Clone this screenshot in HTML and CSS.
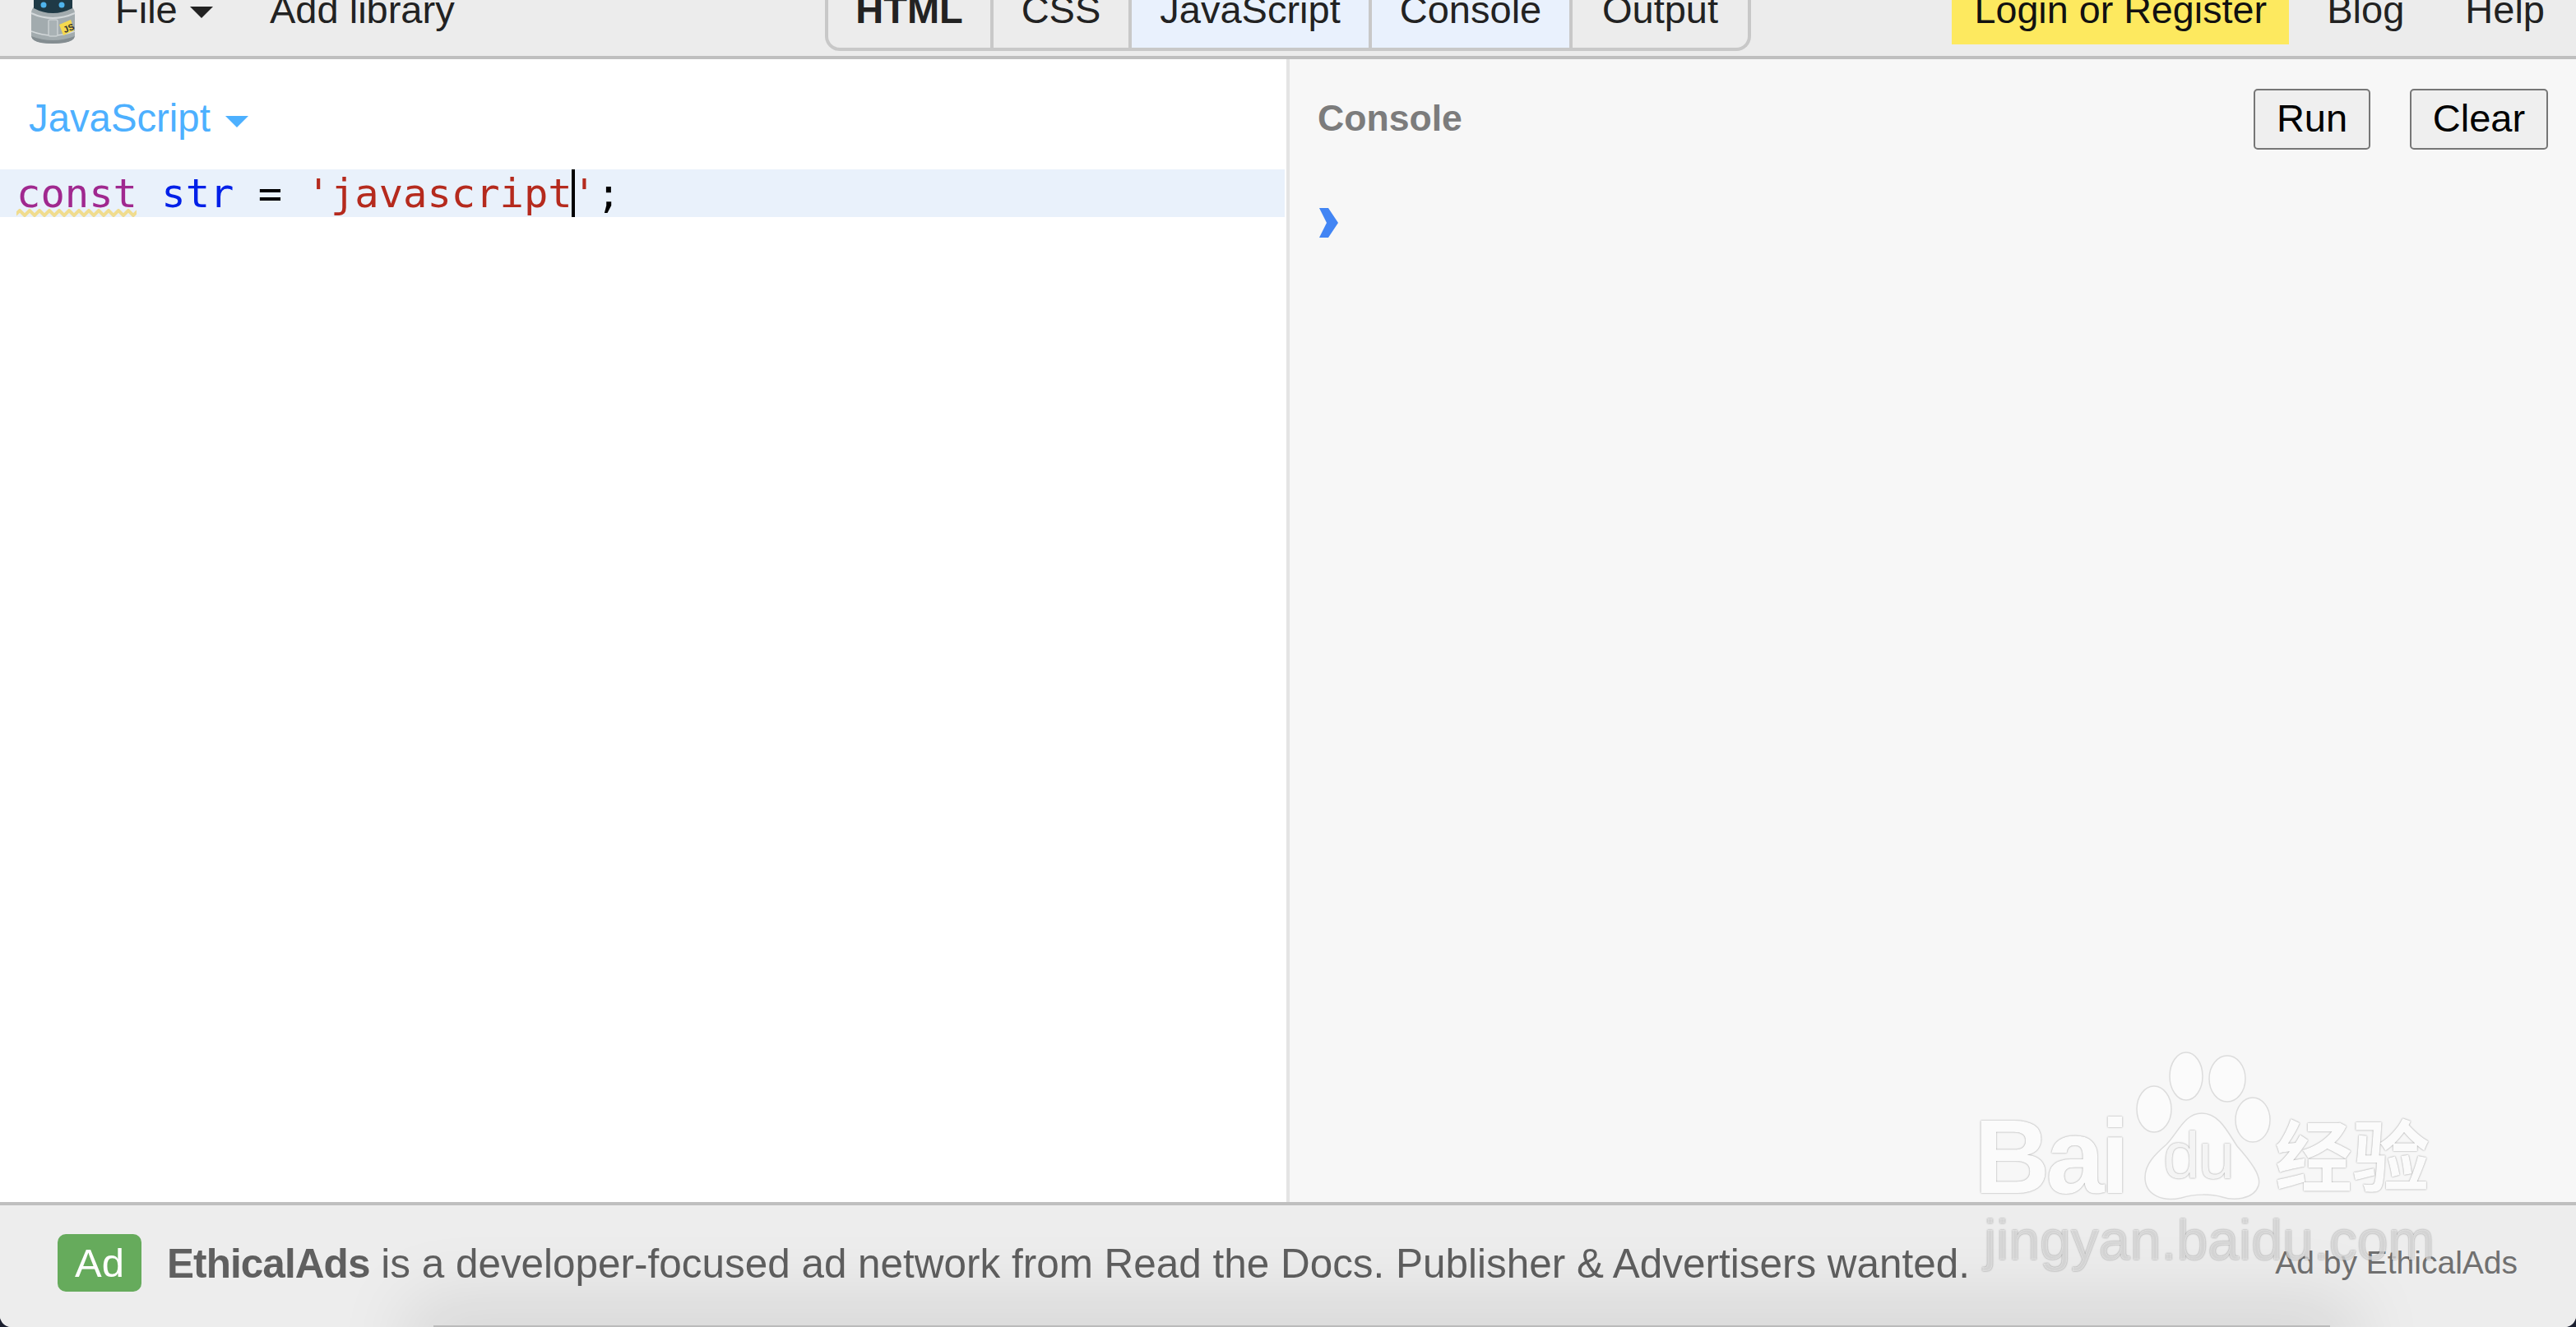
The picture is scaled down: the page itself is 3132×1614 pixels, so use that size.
FILE: index.html
```html
<!DOCTYPE html>
<html lang="en">
<head>
<meta charset="utf-8">
<title>JS Bin</title>
<link rel="stylesheet" href="styles.css">
</head>
<body>
<div class="page">
  <header class="topbar">
    <div class="nav-left">
      <svg class="logo" viewBox="0 0 60 56" width="60" height="56">
        <path d="M4 16 Q4 10 9 8 L51 8 Q57 10 57 16 L57 44 Q56 50 44 52 Q30 54 16 52 Q5 50 4 44 Z" fill="#a2abae"/>
        <path d="M4 38 Q30 48 57 38" fill="none" stroke="#d3d8da" stroke-width="1.5"/>
        <path d="M4 44 Q5 50 16 52 Q30 54 44 52 Q56 50 57 44 Q30 54 4 44 Z" fill="#848d91"/>
        <path d="M4 16 Q30 28 57 16" fill="none" stroke="#d3d8da" stroke-width="2"/>
        <path d="M7 0 L54 0 L54 10 Q30 22 7 10 Z" fill="#1f3a46"/>
        <circle cx="19" cy="6" r="3.5" fill="#4fb4ec"/>
        <circle cx="41" cy="6" r="3.5" fill="#4fb4ec"/>
        <rect x="25" y="24" width="11" height="20" rx="2" fill="#a9b2b5" stroke="#c9cfd1" stroke-width="1.5"/>
        <polygon points="38,30 52,24 56,37 43,43" fill="#f5d94e"/>
        <text class="logo-js" x="43" y="39" transform="rotate(-22 47 35)">JS</text>
      </svg>
      <a class="nav-item nav-file">File<span class="caret caret-dark"></span></a>
      <a class="nav-item">Add library</a>
    </div>
    <nav class="tabs">
      <a class="tab tab-html">HTML</a>
      <a class="tab tab-css">CSS</a>
      <a class="tab tab-js tab-on">JavaScript</a>
      <a class="tab tab-console tab-on">Console</a>
      <a class="tab tab-output">Output</a>
    </nav>
    <div class="nav-right">
      <a class="login">Login or Register</a>
      <a class="nav-item">Blog</a>
      <a class="nav-item">Help</a>
    </div>
  </header>

  <main class="workspace">
    <section class="editor">
      <div class="editor-head">
        <span class="lang">JavaScript<span class="caret caret-blue"></span></span>
      </div>
      <div class="code-line"><span class="code-text"><span class="kw">const<svg class="squiggle" width="146" height="10" viewBox="0 0 146 10"><polyline points="-2,8 4,2 10,8 16,2 22,8 28,2 34,8 40,2 46,8 52,2 58,8 64,2 70,8 76,2 82,8 88,2 94,8 100,2 106,8 112,2 118,8 124,2 130,8 136,2 142,8 148,2" fill="none" stroke="#f0dc8f" stroke-width="4"/></svg></span> <span class="def">str</span> = <span class="str">'javascript<span class="cursor"></span>'</span>;</span></div>
    </section>
    <section class="console">
      <div class="console-head">
        <span class="console-title">Console</span>
        <div class="console-actions">
          <button class="btn btn-run">Run</button>
          <button class="btn btn-clear">Clear</button>
        </div>
      </div>
      <svg class="prompt" width="24" height="36" viewBox="0 0 24 36"><polygon points="0,0 11,0 23,18 11,36 0,36 9,18" fill="#4285f4"/></svg>
    </section>
  </main>

  <footer class="adbar">
    <div class="ad-main">
      <span class="ad-badge">Ad</span>
      <span class="ad-copy"><b class="ad-brand">EthicalAds</b> is a developer-focused ad network from Read the Docs. Publisher &amp; Advertisers wanted.</span>
    </div>
    <span class="ad-by">Ad by EthicalAds</span>
    <div class="edge-shadow"></div>
  </footer>

  <div class="watermark">
    <svg class="wm-paw" width="180" height="190" viewBox="0 0 180 190">
      <g fill="#fbfbfb" stroke="#dcdcdc" stroke-width="1.5">
        <ellipse cx="29" cy="79" rx="21" ry="28"/>
        <ellipse cx="68" cy="39" rx="20" ry="29"/>
        <ellipse cx="118" cy="42" rx="22" ry="28"/>
        <ellipse cx="149" cy="92" rx="21" ry="27"/>
        <path d="M87 84 C108 84 118 106 130 124 C146 142 160 160 156 172 C150 190 124 190 112 186 C98 182 78 182 62 187 C40 192 18 184 18 162 C18 146 30 134 44 122 C58 108 66 84 87 84 Z"/>
      </g>
    </svg>
    <span class="wm-bai">Bai</span>
    <span class="wm-du">du</span>
    <span class="wm-cn">经验</span>
    <span class="wm-url">jingyan.baidu.com</span>
  </div>
</div>
</body>
</html>
```
FILE: styles.css
```css
* { box-sizing: border-box; }
html, body { margin: 0; height: 100%; background: #1c2030; overflow: hidden; }
body { font-family: "Liberation Sans", Arial, sans-serif; }
.page { position: relative; display: flex; flex-direction: column; height: 1614px; overflow: hidden; border-radius: 0 0 14px 14px; background: #fff; }

.topbar { height: 72px; flex: none; background: #ececec; border-bottom: 4px solid #bfbfbf; display: grid; grid-template-columns: 1003px 1126px 1fr; color: #222; font-size: 47px; }
.topbar a { white-space: nowrap; }
.nav-left { display: flex; align-items: flex-end; position: relative; padding-left: 34px; height: 68px; }
.logo { align-self: flex-start; flex: none; }
.logo-js { font: bold 11px "Liberation Sans", sans-serif; fill: #333; }
.nav-item { line-height: 46px; padding-bottom: 33px; height: 46px; display: flex; align-items: flex-end; }
.nav-left, .nav-right { line-height: 46px; }
.nav-file { margin-left: 46px; width: 188px; }
.caret { display: inline-block; width: 0; height: 0; border-left: 14px solid transparent; border-right: 14px solid transparent; }
.caret-dark { border-top: 14px solid #222; margin: 0 0 13px 15px; }
.caret-blue { border-top: 14px solid #4db0ff; margin: 0 0 5px 18px; }

.tabs { display: flex; height: 62px; align-self: flex-start; border: 4px solid #c8c8c8; border-top: 0; border-radius: 0 0 18px 18px; overflow: hidden; }
.tab { display: flex; align-items: flex-end; justify-content: center; padding-bottom: 23px; line-height: 46px; height: 58px; border-right: 4px solid #c8c8c8; }
.tab:last-child { border-right: 0; }
.tab-html { width: 201px; font-weight: bold; }
.tab-css { width: 168px; }
.tab-js { width: 292px; }
.tab-console { width: 244px; }
.tab-output { flex: 1; }
.tab-on { background: #e9f1fd; }

.nav-right { display: flex; align-items: flex-start; justify-content: flex-end; padding-right: 38px; height: 68px; gap: 46px; }
.nav-right .nav-item { height: 68px; padding-bottom: 33px; }
.nav-right .nav-item:last-child { margin-left: 28px; }
.login { height: 54px; width: 410px; background: #fde95f; color: #111; display: flex; align-items: flex-end; justify-content: center; padding-bottom: 19px; line-height: 46px; font-size: 46.7px; }

.workspace { flex: 1; display: flex; min-height: 0; }
.editor { width: 1564px; flex: none; background: #fff; padding-right: 2px; }
.editor-head { height: 134px; padding: 44px 0 0 35px; }
.lang { color: #4db0ff; font-size: 47.3px; line-height: 56px; white-space: nowrap; }
.code-line { height: 58px; background: #e9f1fb; padding-left: 20px; font: 48.8px/60px "DejaVu Sans Mono", monospace; color: #000; white-space: pre; }
.kw { color: #a0288f; position: relative; display: inline-block; height: 58px; }
.squiggle { position: absolute; left: 0; bottom: 0; }
.def { color: #0020e8; }
.str { color: #b52a1d; position: relative; }
.cursor { position: absolute; display: inline-block; width: 4px; height: 58px; background: #000; margin-left: -1px; vertical-align: top; }

.console { flex: 1; background: #f7f7f7; border-left: 4px solid #e4e4e4; padding-left: 34px; }
.console-head { display: flex; justify-content: space-between; align-items: flex-start; padding: 36px 34px 0 0; }
.console-title { font-weight: bold; color: #7c7c7c; font-size: 44.6px; line-height: 70px; padding-top: 1px; }
.console-actions { display: flex; gap: 48px; }
.btn { height: 74px; padding: 0 0 3px; background: #efefef; border: 2.5px solid #767676; border-radius: 5px; font: 47px/1 "Liberation Sans", sans-serif; color: #000; }
.btn-run { width: 142px; }
.btn-clear { width: 168px; }
.prompt { display: block; margin: 71px 0 0 2px; }

.adbar { position: relative; flex: none; height: 152px; background: #ededed; border-top: 4px solid #bfbfbf; display: flex; justify-content: space-between; align-items: center; overflow: hidden; padding: 0 71px 0 70px; }
.ad-main { display: flex; align-items: center; gap: 31px; padding-bottom: 8px; }
.ad-badge { width: 102px; height: 70px; border-radius: 10px; background: #66ab5c; color: #fff; font-size: 49px; display: flex; align-items: center; justify-content: center; }
.ad-copy { color: #5f5f5f; font-size: 49.45px; white-space: nowrap; }
.ad-brand { letter-spacing: -0.9px; }
.ad-by { color: #707070; font-size: 39px; white-space: nowrap; margin-bottom: 8px; }
.edge-shadow { position: absolute; left: 527px; right: 299px; bottom: -40px; height: 42px; background: #bbb; box-shadow: 0 0 90px 30px rgba(0, 0, 0, .1); }

.watermark { position: absolute; left: 2400px; top: 1270px; width: 600px; height: 290px; color: #fbfbfb; pointer-events: none; }
.wm-paw { position: absolute; left: 190px; top: 0; }
.wm-bai, .wm-du, .wm-cn, .wm-url { position: absolute; white-space: nowrap; text-shadow: 0 0 2px rgba(0, 0, 0, .45); line-height: 1; }
.wm-bai { left: 0; top: 73px; font-weight: bold; font-size: 128px; letter-spacing: -5px; }
.wm-du { left: 230px; top: 96px; font-size: 80px; letter-spacing: -2px; color: #f4f4f4; }
.wm-cn { left: 366px; top: 84px; font: bold 94px/1 "Noto Sans CJK SC", sans-serif; }
.wm-url { left: 12px; top: 204px; font-size: 68px; color: rgba(255, 255, 255, .65); }
```
